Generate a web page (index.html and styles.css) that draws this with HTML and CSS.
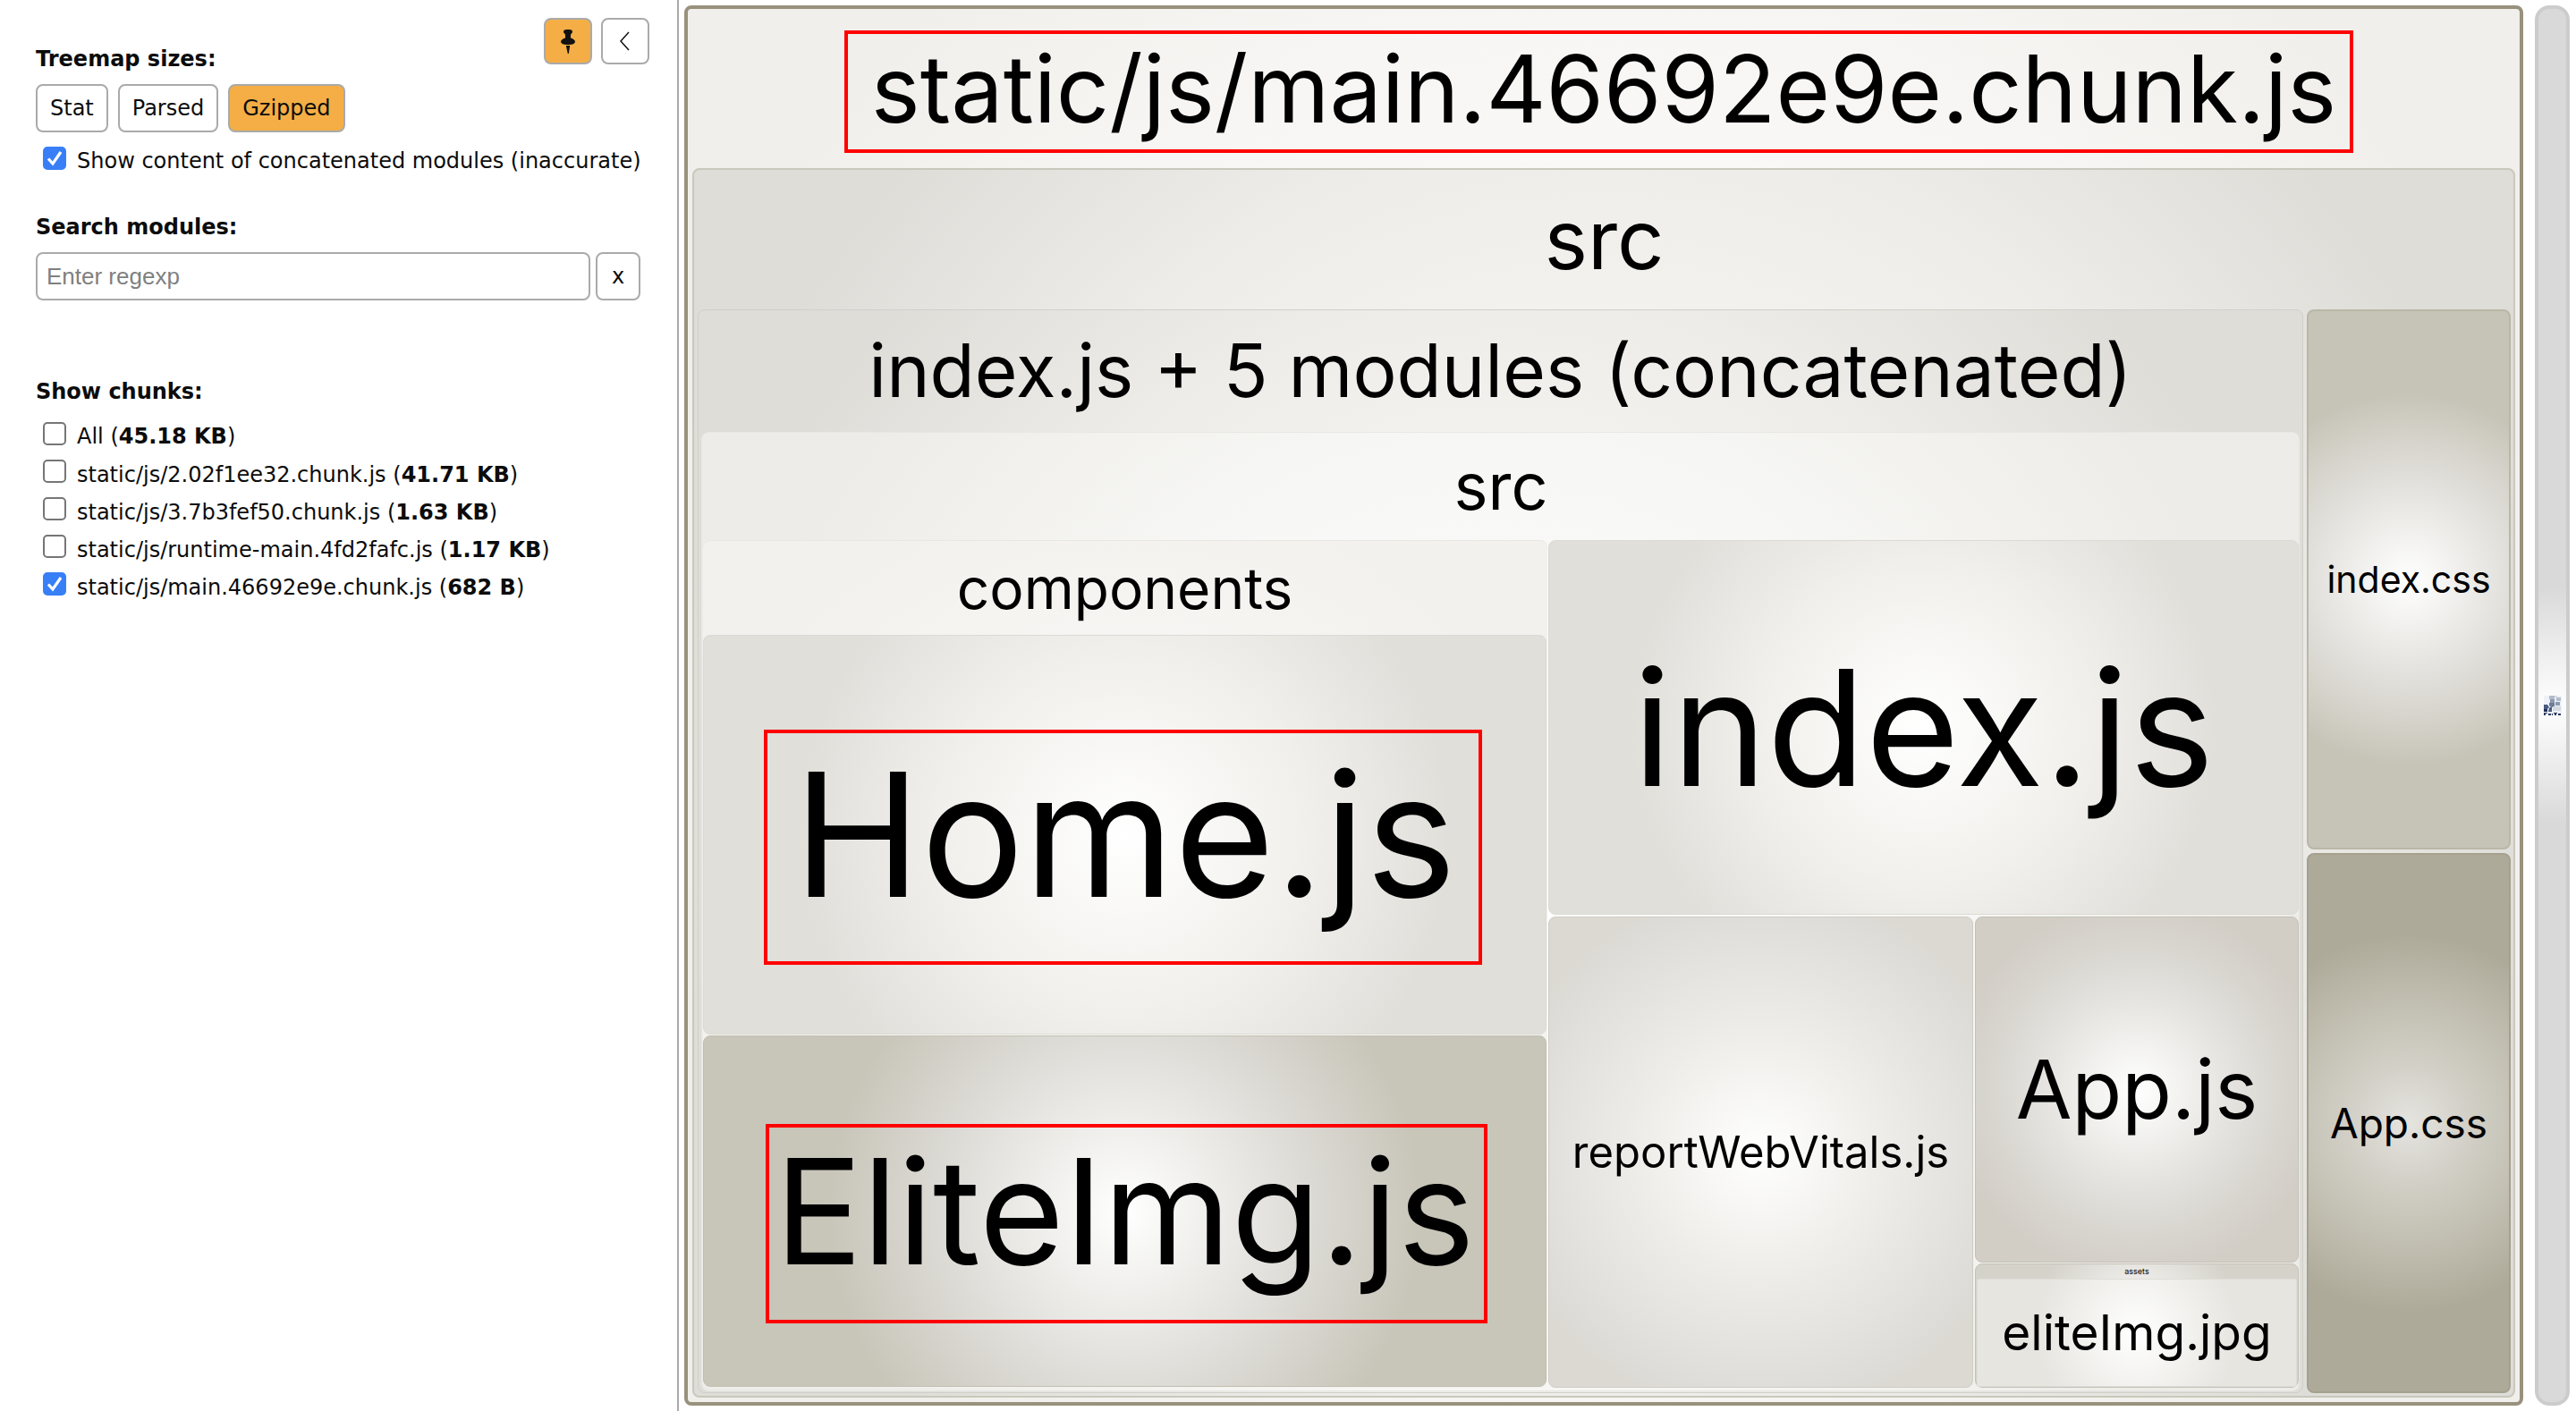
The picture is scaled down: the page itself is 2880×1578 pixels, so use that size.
FILE: index.html
```html
<!DOCTYPE html>
<html lang="en">
<head>
<meta charset="utf-8">
<title>Webpack Bundle Analyzer</title>
<link rel="stylesheet" href="styles.css">
</head>
<body>
<aside class="sidebar">
  <header class="sidebar-head">
    <h2 class="heading">Treemap sizes:</h2>
    <div class="tools">
      <button type="button" class="btn tool active" aria-label="Pin sidebar">
        <svg width="16" height="27" viewBox="0 0 16 27" aria-hidden="true"><path fill="#111" d="M4 .5Q8-.6 12 .5Q14 2.500 12 4.500Q11 5 11 6V9.500Q16 11 16 14Q15 17 9.500 17H6.500Q1 17 0 14Q0 11 5 9.500V6Q5 5 4 4.500Q2 2.500 4 .5ZM5.800 18H10.200L8.800 27H7.800Z"/></svg>
      </button>
      <button type="button" class="btn tool" aria-label="Hide sidebar">
        <svg width="12" height="22" viewBox="0 0 12 22" aria-hidden="true"><path fill="none" stroke="#111" stroke-width="1.500" d="M10 1L1 11L10 21"/></svg>
      </button>
    </div>
  </header>
  <div class="sizes">
    <button type="button" class="btn">Stat</button>
    <button type="button" class="btn">Parsed</button>
    <button type="button" class="btn active">Gzipped</button>
  </div>
  <label class="check"><input type="checkbox" checked><span>Show content of concatenated modules (inaccurate)</span></label>

  <section class="search">
    <h2 class="heading"><label for="query">Search modules:</label></h2>
    <div class="search-row">
      <input id="query" class="query" type="text" placeholder="Enter regexp">
      <button type="button" class="btn clear">x</button>
    </div>
  </section>

  <section class="chunks">
    <h2 class="heading">Show chunks:</h2>
    <label class="check"><input type="checkbox"><span>All (<b>45.18 KB</b>)</span></label>
    <label class="check"><input type="checkbox"><span>static/js/2.02f1ee32.chunk.js (<b>41.71 KB</b>)</span></label>
    <label class="check"><input type="checkbox"><span>static/js/3.7b3fef50.chunk.js (<b>1.63 KB</b>)</span></label>
    <label class="check"><input type="checkbox"><span>static/js/runtime-main.4fd2fafc.js (<b>1.17 KB</b>)</span></label>
    <label class="check"><input type="checkbox" checked><span>static/js/main.46692e9e.chunk.js (<b>682 B</b>)</span></label>
  </section>
</aside>

<main class="treemap">
  <div class="group chunk">
    <div class="label chunk-label">static/js/main.46692e9e.chunk.js</div>
    <div class="mark mark-chunk"></div>
    <div class="group src">
      <div class="label src-label">src</div>
      <div class="src-cells">
        <div class="group bundle">
          <div class="label bundle-label">index.js + 5 modules (concatenated)</div>
          <div class="group inner">
            <div class="label inner-label">src</div>
            <div class="inner-cells">
              <div class="group components">
                <div class="label components-label">components</div>
                <div class="component-cells">
                  <div class="leaf light home">Home.js<div class="mark mark-home"></div></div>
                  <div class="leaf sand elite">EliteImg.js<div class="mark mark-elite"></div></div>
                </div>
              </div>
              <div class="modules">
                <div class="leaf light index-js">index.js</div>
                <div class="module-row">
                  <div class="leaf stone report">reportWebVitals.js</div>
                  <div class="module-column">
                    <div class="leaf clay app-js">App.js</div>
                    <div class="group assets">
                      <div class="label assets-label">assets</div>
                      <div class="leaf pale elite-jpg">eliteImg.jpg</div>
                    </div>
                  </div>
                </div>
              </div>
            </div>
          </div>
        </div>
        <div class="styles">
          <div class="leaf sage index-css">index.css</div>
          <div class="leaf moss app-css">App.css</div>
        </div>
      </div>
    </div>
  </div>
  <div class="foamtree">
    <svg width="20" height="22" viewBox="0 0 20 22" role="img" aria-label="FoamTree">
      <rect width="20" height="22" fill="#eef1f5"/>
      <path fill="#b4bccb" d="M6 0H12V4H6ZM14 2H19V6H14Z"/>
      <path fill="#8b98b0" d="M7 4H12V8H7ZM13 7H18V11H13Z"/>
      <path fill="#6c7c99" d="M6 8H12V13H8L6 11Z"/>
      <path fill="#4a5b7f" d="M0 10H4L6 13L4 15H0ZM7 13H9V18H5L6 14Z"/>
      <path fill="#1f3158" d="M0 15H4V18H0Z"/>
      <path fill="#d5dae3" d="M12 0H15V2H12ZM10 12H19V17H10Z"/>
      <path fill="#2a3b5f" d="M0 19H4V20H2V22H0ZM5 20H8V22H5ZM9 20H10V22H9ZM11 19H15V20H14V22H12V20H11ZM16 20H19V22H16Z"/>
    </svg>
  </div>
</main>
</body>
</html>
```
FILE: styles.css
```css
* {
  box-sizing: border-box;
}

body {
  margin: 0;
  min-height: 100vh;
  display: flex;
  background: #fff;
  color: #0c0c0c;
  font-family: Verdana, "DejaVu Sans", sans-serif;
  font-size: 24px;
  line-height: 28px;
}

/* Sidebar */
.sidebar {
  flex: none;
  width: 759px;
  padding: 20px 31px 20px 40px;
  border-right: 2px solid #aaa;
}

.sidebar-head {
  display: flex;
  justify-content: space-between;
  align-items: flex-start;
  height: 74px;
}

.heading {
  margin: 0;
  font-size: 24px;
  line-height: 28px;
  font-weight: bold;
}

.sidebar-head .heading {
  margin-top: 32px;
}

.tools {
  display: flex;
  gap: 10px;
}

.btn {
  height: 54px;
  padding: 0 14px;
  border: 2px solid #aaa;
  border-radius: 8px;
  background: #fff;
  color: inherit;
  font: inherit;
}

.btn.active {
  background: #f4ae45;
}

.btn.tool {
  display: flex;
  align-items: center;
  justify-content: center;
  width: 54px;
  height: 52px;
  padding: 0;
}

.sizes {
  display: flex;
  gap: 11px;
}

.check {
  display: flex;
  align-items: flex-start;
  gap: 12px;
  width: max-content;
  padding-left: 8px;
  white-space: nowrap;
}

.check span {
  padding-top: 2px;
}

.sizes + .check {
  margin-top: 16px;
}

.check input {
  flex: none;
  appearance: none;
  width: 26px;
  height: 26px;
  margin: 0;
  border: 2px solid #767676;
  border-radius: 5px;
  background: #fff;
}

.check input:checked {
  border-color: #387ff7;
  background: #387ff7 url("data:image/svg+xml,%3Csvg xmlns='http://www.w3.org/2000/svg' viewBox='0 0 22 22'%3E%3Cpath d='M4 11.500L9 17L18 4' fill='none' stroke='white' stroke-width='3.200'/%3E%3C/svg%3E") center / 22px 22px no-repeat;
}

.search {
  width: 676px;
  margin-top: 46px;
}

.search-row {
  display: flex;
  gap: 6px;
  margin-top: 14px;
}

.query {
  flex: 1;
  min-width: 0;
  height: 54px;
  padding: 0 10px;
  border: 2px solid #aaa;
  border-radius: 8px;
  font-family: Arial, "Liberation Sans", sans-serif;
  font-size: 26px;
}

.query::placeholder {
  color: #808080;
}

.btn.clear {
  width: 50px;
}

.chunks {
  display: flex;
  flex-direction: column;
  gap: 12px;
  margin-top: 88px;
}

.chunks .heading {
  margin-bottom: 8px;
}

.chunks .check + .check span {
  padding-top: 4px;
  line-height: 26px;
}

/* Treemap */
.treemap {
  flex: 1;
  min-width: 0;
  display: flex;
  gap: 13px;
  padding: 6px 7px 6px 6px;
  color: #000;
  font-family: Inter, sans-serif;
}

.group {
  display: flex;
  flex-direction: column;
  border-style: solid;
  border-radius: 8px;
}

.label {
  flex: none;
  text-align: center;
  white-space: nowrap;
}

.mark {
  position: absolute;
  border: 4px solid #f00;
}

.chunk {
  position: relative;
  flex: 1;
  border: 4px solid #98917c;
  padding: 0 5px 5px;
  background: radial-gradient(circle farthest-corner, #fff, #f7f6f4 60%, #f0efeb 85%);
}

.chunk-label {
  font-size: 104px;
  line-height: 178px;
}

.mark-chunk {
  top: 24px;
  left: 175px;
  right: 186px;
  height: 137px;
}

.src {
  flex: 1;
  border-width: 2px;
  border-color: #c9c8bc;
  padding: 0 3px 3px 4px;
  background: radial-gradient(circle farthest-corner, #fff, #eeede9 58%, #deddd8 85%);
}

.src-label {
  font-size: 92px;
  line-height: 156px;
}

.src-cells {
  flex: 1;
  display: grid;
  grid-template-columns: 1795fr 228fr;
  gap: 4px;
}

.bundle {
  border-width: 1px;
  border-color: #d0cfc8;
  padding: 0 3px 1px;
  background: radial-gradient(circle farthest-corner, #fff, #eeede9 56%, #deddd8 84%);
}

.bundle-label {
  font-size: 82px;
  line-height: 136px;
}

.inner {
  flex: 1;
  border-width: 1px;
  border-color: #e8e7e3;
  padding: 0 0 3px 1px;
  background: radial-gradient(circle farthest-corner, #fff, #f7f7f5 50%, #edece8 85%);
}

.inner-label {
  font-size: 72px;
  line-height: 120px;
}

.inner-cells {
  flex: 1;
  display: grid;
  grid-template-columns: 944fr 839fr;
  gap: 1px;
}

.components {
  border-width: 1px 0 0;
  border-color: #e8e7e2;
  padding: 0 1px 1px 0;
  background: radial-gradient(circle farthest-corner, #fcfcfb, #f7f6f4 50%, #f2f1ed 80%);
}

.components-label {
  font-size: 64px;
  line-height: 105px;
}

.component-cells {
  flex: 1;
  display: grid;
  grid-template-rows: 446fr 393fr;
  gap: 1px;
}

.modules {
  display: grid;
  grid-template-rows: 419fr 526fr;
  gap: 2px;
}

.module-row {
  display: grid;
  grid-template-columns: 475fr 362fr;
  gap: 2px;
}

.module-column {
  display: grid;
  grid-template-rows: 386fr 139fr;
  gap: 1px;
}

.styles {
  display: grid;
  grid-template-rows: 1fr 1fr;
  gap: 4px;
}

/* Leaves */
.leaf {
  position: relative;
  display: flex;
  align-items: center;
  justify-content: center;
  min-width: 0;
  min-height: 0;
  border: 1px solid;
  border-radius: 8px;
  line-height: 1;
  white-space: nowrap;
}

.light {
  border-color: #dbdad4;
  background: radial-gradient(circle farthest-corner, #fff, #f0efeb 40%, #e0dfda 70%);
}

.sand {
  border-color: #c2bfb1;
  background: radial-gradient(circle farthest-corner, #fff, #e5e4e0 30%, #d5d2cb 50%, #c8c5b9 65%);
}

.stone {
  border-color: #cfccc3;
  background: radial-gradient(circle farthest-corner, #fff, #edece8 40%, #dedddA 75%, #dcd9d2 85%);
}

.clay {
  border-color: #c4c1b6;
  background: radial-gradient(circle farthest-corner, #fff, #e4e3df 40%, #d8d5cf 63%, #d2cec6 80%);
}

.pale {
  border-color: #deddd7;
  border-radius: 2px;
  background: radial-gradient(circle farthest-corner, #fff, #e6e5e0 60%);
}

.sage {
  border: 2px solid #bab7a8;
  background: radial-gradient(circle farthest-corner, #fff, #e5e4e0 30%, #d5d2ca 50%, #c6c3b7 65%);
}

.moss {
  border: 2px solid #a6a08f;
  background: radial-gradient(circle farthest-corner, #e5e4df, #d3d0c8 20%, #c3c1b3 40%, #aeaa9a 66%);
}

.home {
  font-size: 192px;
}

.mark-home {
  top: 105px;
  left: 67px;
  right: 71px;
  bottom: 77px;
}

.elite {
  font-size: 163px;
}

.mark-elite {
  top: 98px;
  left: 69px;
  right: 65px;
  bottom: 70px;
}

.index-js {
  font-size: 180px;
}

.report {
  font-size: 49px;
}

.app-js {
  font-size: 91px;
}

.assets {
  border-width: 1px;
  border-color: #c4c1b6;
  padding: 0 1px;
  background: radial-gradient(circle farthest-corner, #fff, #d5d2ca 60%);
}

.assets-label {
  font-size: 9px;
  line-height: 16px;
}

.elite-jpg {
  flex: 1;
  font-size: 55px;
}

.index-css {
  font-size: 41px;
}

.app-css {
  font-size: 46px;
}

.foamtree {
  flex: none;
  display: flex;
  align-items: center;
  justify-content: center;
  width: 39px;
  border: 4px solid #ccc;
  border-radius: 16px;
  background: radial-gradient(circle 132px, #fff, #d9d9d9);
}
```
